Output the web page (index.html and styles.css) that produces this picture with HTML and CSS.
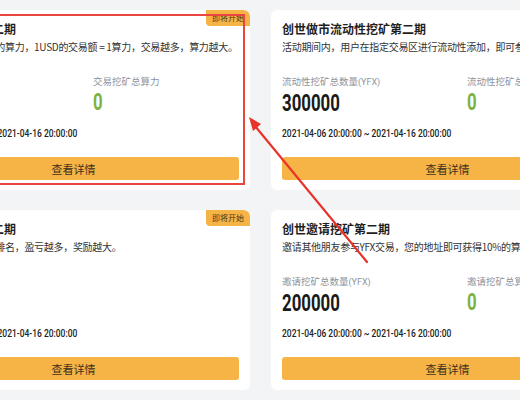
FILE: index.html
```html
<!DOCTYPE html>
<html lang="zh-CN">

<head>
    <meta charset="UTF-8">
    <meta name="viewport" content="width=device-width, initial-scale=1.0">
    <title>挖矿活动</title>
    <link rel="stylesheet" href="styles.css">
</head>

<body>
    <div class="board">
        <!-- 交易挖矿 -->
        <div class="card">
            <span class="badge">即将开始</span>
            <h3 class="card-title">创世交易挖矿第二期</h3>
            <p class="card-desc">交易者即可获得相应的算力，1USD的交易额 = 1算力，交易越多，算力越大。</p>
            <div class="stats">
                <div class="stat"></div>
                <div class="stat">
                    <div class="stat-label">交易挖矿总算力</div>
                    <div class="stat-value green">0</div>
                </div>
            </div>
            <div class="period">2021-04-06 20:00:00 ~ 2021-04-16 20:00:00</div>
            <button class="btn-detail">查看详情</button>
        </div>

        <!-- 做市挖矿 -->
        <div class="card">
            <span class="badge">即将开始</span>
            <h3 class="card-title">创世做市流动性挖矿第二期</h3>
            <p class="card-desc">活动期间内，用户在指定交易区进行流动性添加，即可参与挖矿。</p>
            <div class="stats">
                <div class="stat">
                    <div class="stat-label">流动性挖矿总数量<small>(YFX)</small></div>
                    <div class="stat-value">300000</div>
                </div>
                <div class="stat">
                    <div class="stat-label">流动性挖矿总算力</div>
                    <div class="stat-value green">0</div>
                </div>
            </div>
            <div class="period">2021-04-06 20:00:00 ~ 2021-04-16 20:00:00</div>
            <button class="btn-detail">查看详情</button>
        </div>

        <!-- 交易大赛 -->
        <div class="card">
            <span class="badge">即将开始</span>
            <h3 class="card-title">创世交易大赛第二期</h3>
            <p class="card-desc">根据用户收益率进行排名，盈亏越多，奖励越大。</p>
            <div class="stats"></div>
            <div class="period">2021-04-06 20:00:00 ~ 2021-04-16 20:00:00</div>
            <button class="btn-detail">查看详情</button>
        </div>

        <!-- 邀请挖矿 -->
        <div class="card">
            <span class="badge">即将开始</span>
            <h3 class="card-title">创世邀请挖矿第二期</h3>
            <p class="card-desc">邀请其他朋友参与YFX交易，您的地址即可获得10%的算力奖励。</p>
            <div class="stats">
                <div class="stat">
                    <div class="stat-label">邀请挖矿总数量<small>(YFX)</small></div>
                    <div class="stat-value">200000</div>
                </div>
                <div class="stat">
                    <div class="stat-label">邀请挖矿总算力</div>
                    <div class="stat-value green">0</div>
                </div>
            </div>
            <div class="period">2021-04-06 20:00:00 ~ 2021-04-16 20:00:00</div>
            <button class="btn-detail">查看详情</button>
        </div>
    </div>

    <!-- 标注 -->
    <div class="mark-box"></div>
    <svg class="mark-arrow" width="520" height="400" viewBox="0 0 520 400">
        <line x1="367" y1="262" x2="255" y2="126" stroke="#e8322a" stroke-width="2.2" stroke-linecap="round" />
        <polygon points="249,117 261,124 253,131" fill="#e8322a" />
    </svg>
</body>

</html>
```

FILE: styles.css
```css
/* Reset */
* {
    margin: 0;
    padding: 0;
    box-sizing: border-box;
}

html,
body {
    overflow: hidden;
}

body {
    font-family: "Noto Sans CJK SC", "Noto Sans", sans-serif;
    background-color: #f3f4f6;
    color: #222;
    width: 520px;
    height: 400px;
}

/* Card grid (cropped view) */
.board {
    display: grid;
    grid-template-columns: 353px 353px;
    column-gap: 21px;
    row-gap: 20px;
    margin-left: -103px;
    padding-top: 10px;
    width: max-content;
}

.card {
    position: relative;
    background: #fff;
    border-radius: 6px;
    padding: 10px 11px;
    overflow: hidden;
}

.badge {
    position: absolute;
    top: 0;
    right: 0;
    width: 44px;
    height: 16px;
    line-height: 16px;
    text-align: center;
    font-size: 8px;
    color: #4a3a1c;
    background-color: #f5b445;
    border-radius: 0 6px 0 4px;
}

.card-title {
    font-size: 12px;
    font-weight: 700;
    line-height: 18px;
    color: #1f1f1f;
}

.card-desc {
    font-size: 10px;
    letter-spacing: -0.3px;
    line-height: 18px;
    color: #333;
    white-space: nowrap;
}

/* Stats */
.stats {
    display: grid;
    grid-template-columns: 185px 1fr;
    height: 42px;
    margin-top: 18px;
}

.stat-label {
    font-size: 9.5px;
    line-height: 14px;
    color: #8e939b;
    white-space: nowrap;
}

.stat-label small {
    font-family: "Roboto", sans-serif;
    font-size: 9px;
}

/* condensed digits, like the DIN face of the original */
.stat-value {
    font-family: "Roboto", sans-serif;
    font-size: 24px;
    font-weight: 700;
    line-height: 28px;
    color: #1a1a1a;
    transform: scaleX(0.7);
    transform-origin: left center;
}

.stat-value.green {
    color: #7db243;
}

.period {
    margin-top: 11px;
    font-family: "Roboto", sans-serif;
    font-size: 11px;
    font-weight: 500;
    line-height: 14px;
    color: #222;
    white-space: nowrap;
    transform: scaleX(0.77);
    transform-origin: left center;
}

/* Buttons */
.btn-detail {
    display: block;
    width: 100%;
    height: 23px;
    margin-top: 16px;
    border: none;
    border-radius: 3px;
    background-color: #f5b445;
    color: #3d3020;
    font-family: inherit;
    font-size: 11px;
    cursor: pointer;
}

/* Annotation overlay */
.mark-box {
    position: absolute;
    left: -4px;
    top: 14px;
    width: 249px;
    height: 171px;
    border: 2px solid #e8463e;
}

.mark-arrow {
    position: absolute;
    left: 0;
    top: 0;
    pointer-events: none;
}
```
